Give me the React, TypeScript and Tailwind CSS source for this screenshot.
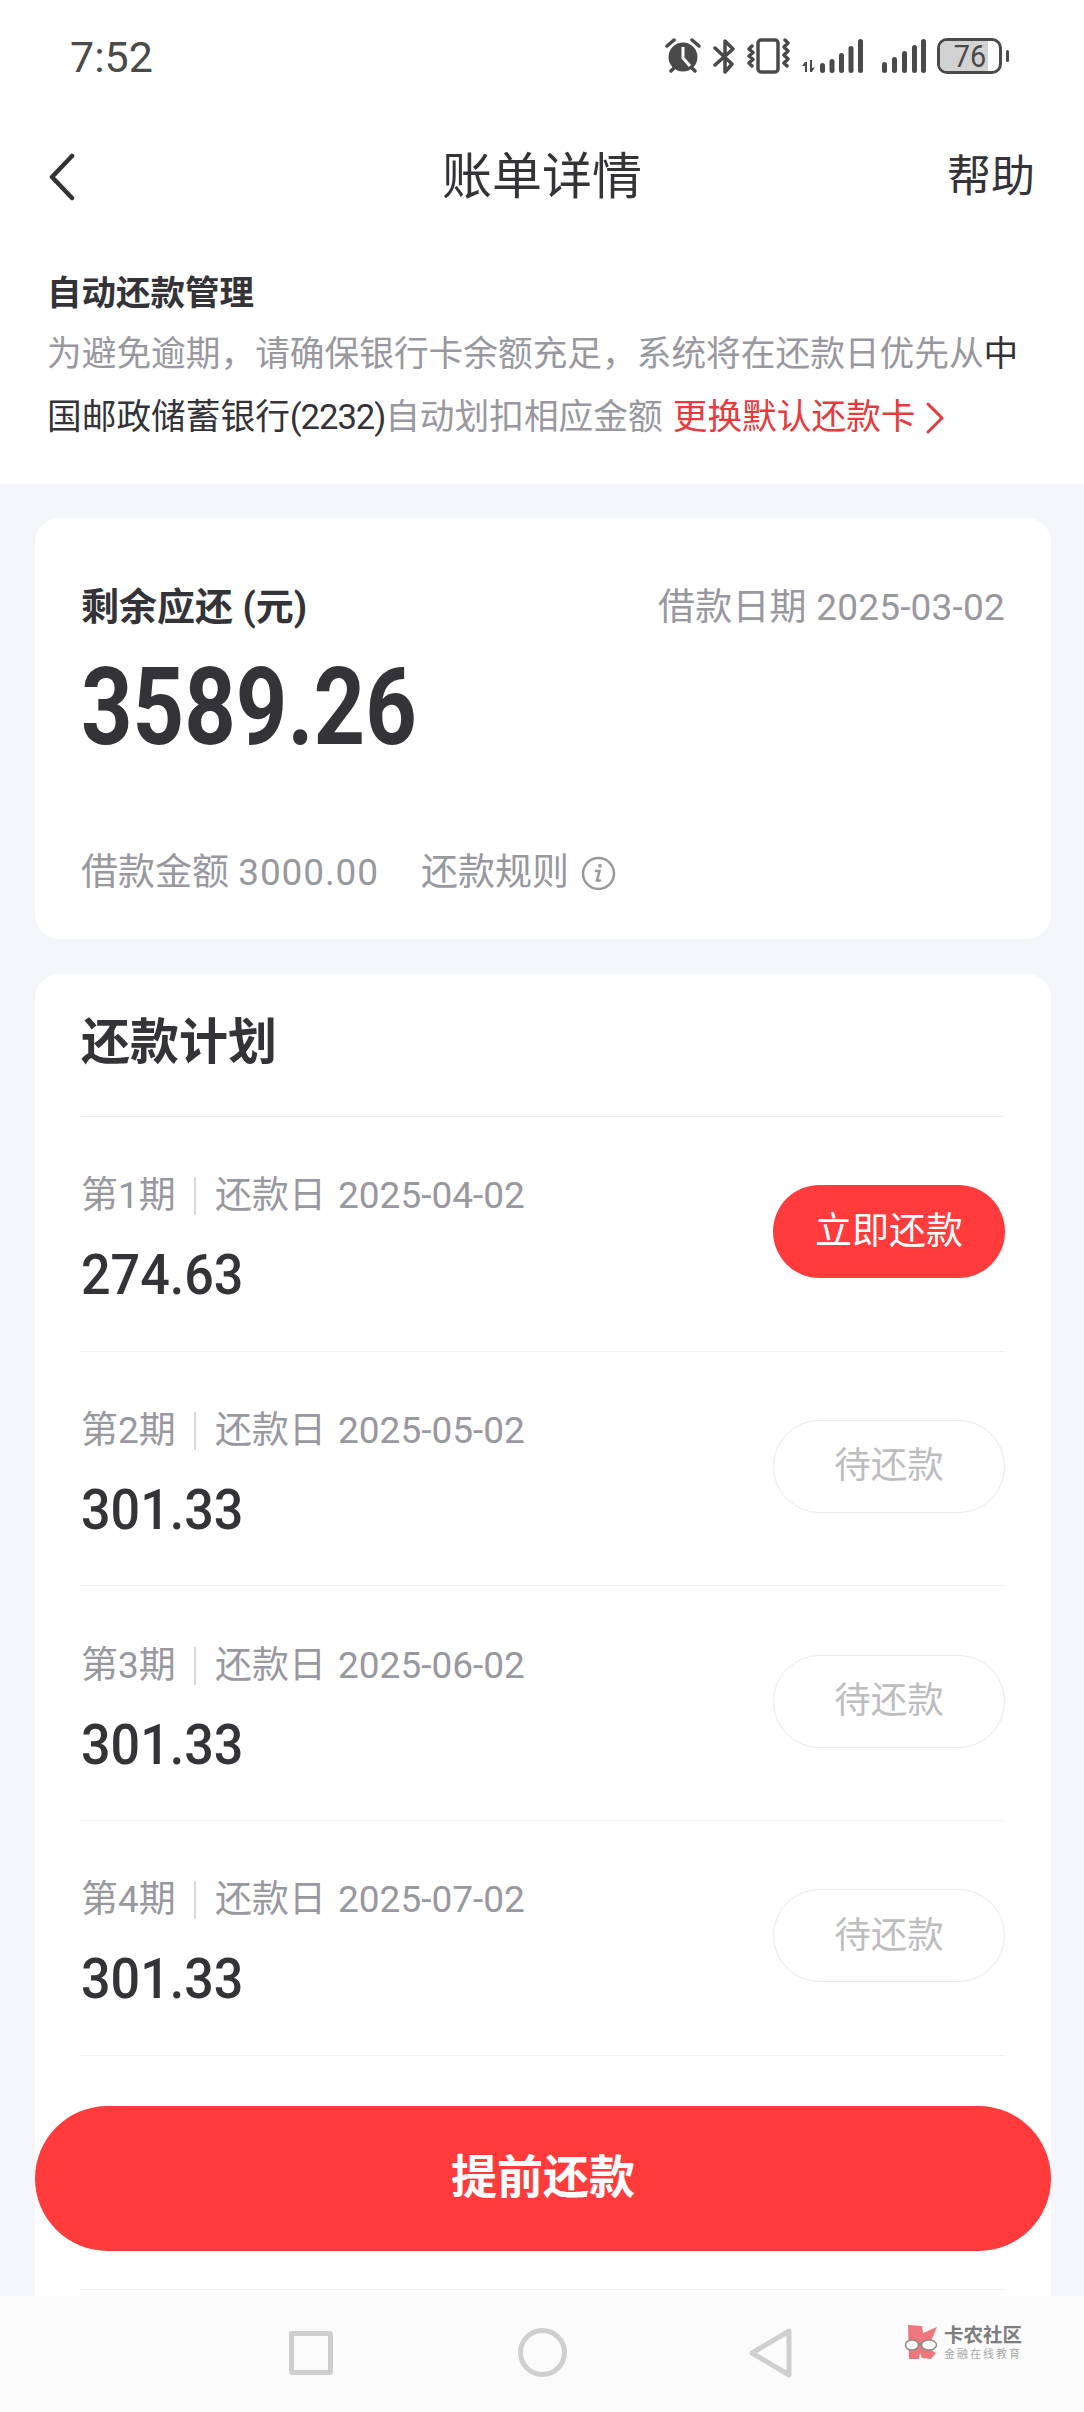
const plans = [
  { no: 1, date: '2025-04-02', amount: '274.63', current: true },
  { no: 2, date: '2025-05-02', amount: '301.33', current: false },
  { no: 3, date: '2025-06-02', amount: '301.33', current: false },
  { no: 4, date: '2025-07-02', amount: '301.33', current: false },
];

const StatusIcons = () => (
  <div className="ml-auto flex items-center text-[#4a4a4a]">
    {/* alarm */}
    <svg width="36" height="36" viewBox="0 0 36 36">
      <circle cx="18" cy="19" r="14.5" fill="currentColor" />
      <path d="M18 9v11l7 8" fill="none" stroke="#fff" strokeWidth="3" />
      <path d="M2 8l7-6M34 8l-7-6M6 33l3-3M30 33l-3-3" fill="none" stroke="currentColor" strokeWidth="3.5" strokeLinecap="round" />
    </svg>
    {/* bluetooth */}
    <svg className="ml-3" width="22" height="36" viewBox="0 0 22 36" fill="none" stroke="currentColor" strokeWidth="3.5" strokeLinejoin="round" strokeLinecap="round">
      <path d="M2 10l17 16-7 8V3l8 8-18 16" />
    </svg>
    {/* vibrate */}
    <svg className="ml-3" width="43" height="36" viewBox="0 0 43 36" fill="none" stroke="currentColor" strokeWidth="3.500" strokeLinejoin="round">
      <rect x="11" y="2" width="20" height="32" rx="3" />
      <path d="M5 8l-3 3 4 3.500-4 3.500 4 3.500-4 3.500 3 3M38 2l3 3-4 4 4 4-4 4 4 4-4 4 3 3" strokeLinecap="round" />
    </svg>
    {/* signal 1 */}
    <svg className="ml-3" width="61" height="36" viewBox="0 0 61 36" fill="currentColor">
      <path d="M3 24h2v10H3zM8 22h2v12H8zM0 28l3-4v4zM10 30l3-1-3 5z" />
      <rect x="18" y="25" width="5" height="10" rx="2.500" />
      <rect x="27.500" y="21" width="5" height="14" rx="2.500" />
      <rect x="37" y="15" width="5" height="20" rx="2.500" />
      <rect x="46.500" y="8" width="5" height="27" rx="2.500" />
      <rect x="56" y="1" width="5" height="34" rx="2.500" />
    </svg>
    {/* signal 2 */}
    <svg className="ml-[19px]" width="44" height="36" viewBox="0 0 44 36" fill="currentColor">
      <rect x="0" y="24" width="5" height="11" rx="2.500" />
      <rect x="10" y="19" width="5" height="16" rx="2.500" />
      <rect x="20" y="13" width="5" height="22" rx="2.500" />
      <rect x="30" y="7" width="5" height="28" rx="2.500" />
      <rect x="39" y="1" width="5" height="34" rx="2.500" />
    </svg>
    {/* battery */}
    <div className="relative ml-[11px] flex h-[36px] w-[65px] items-center justify-center overflow-hidden rounded-[10px] border-[3px] border-[#4a4a4a]">
      <div className="absolute inset-y-0 left-0 w-[48px] bg-[#d2d2d2]" />
      <span className="relative scale-x-90 text-[32px] leading-none font-normal">76</span>
    </div>
    <div className="ml-1 h-[12px] w-[3px] rounded-sm bg-[#4a4a4a]" />
  </div>
);

const PlanRow = ({ no, date, amount, current }: (typeof plans)[number]) => (
  <div className="flex h-[234.700px] items-center justify-between border-b border-[#f0f0f2] pb-[4px]">
    <div className="flex flex-col gap-[24px] pt-[13px]">
      <div className="flex h-[50px] items-center text-[37px] leading-[50px] text-[#98989e]">
        <span className="w-[94px] whitespace-nowrap">第{no}期</span>
        <span className="mx-[19px] h-[38px] w-[2px] bg-[#d8d8da]" />
        <span>还款日</span>
        <span className="ml-[12px]">{date}</span>
      </div>
      <div className="origin-left scale-x-[0.93] text-[56px] leading-[60px] font-medium text-[#333338]">{amount}</div>
    </div>
    {current ? (
      <div className="flex h-[93px] w-[232px] items-center justify-center rounded-full bg-[#ff3b3b] text-[37px] text-white">立即还款</div>
    ) : (
      <div className="flex h-[93px] w-[232px] items-center justify-center rounded-full border border-[#e9e9eb] text-[36.500px] text-[#bdbdc0]">待还款</div>
    )}
  </div>
);

const App = () => {
  return (
    <div className="relative h-[2412px] w-[1084px] overflow-hidden bg-[#f4f5f9] font-['Roboto','Noto_Sans_CJK_SC',sans-serif]">
      <div className="bg-white pb-[35px]">
        <div className="flex h-[112px] items-center pr-[75px] pl-[70px]">
          <span className="pt-[2px] text-[43px] leading-none text-[#4a4a4a]">7:52</span>
          <StatusIcons />
        </div>
        <div className="grid h-[126px] grid-cols-[1fr_auto_1fr] items-center px-[49px] pt-[4px]">
          <svg width="26" height="48" viewBox="0 0 26 48" fill="none" stroke="#333338" strokeWidth="4.500" strokeLinecap="round" strokeLinejoin="round">
            <path d="M23 3L3 24l20 21" />
          </svg>
          <span className="text-[50px] text-[#333338]">账单详情</span>
          <span className="justify-self-end text-[44px] text-[#333338]">帮助</span>
        </div>
        <div className="px-[47px] pt-[30px]">
          <div className="text-[34.500px] leading-[50px] font-bold text-[#333338]">自动还款管理</div>
          <div className="mt-[5px] text-[34.700px] leading-[63px] text-[#98989e]">
            <div className="flex">
              <span>为避免逾期，请确保银行卡余额充足，系统将在还款日优先从</span>
              <span className="text-[#333338]">中</span>
            </div>
            <div className="flex items-center">
              <span className="text-[#333338]">国邮政储蓄银行</span>
              <span className="tracking-[-1.100px] text-[#333338]">(2232)</span>
              <span>自动划扣相应金额</span>
              <span className="ml-[10px] text-[#e8393d]">更换默认还款卡</span>
              <svg className="ml-[9px]" width="20" height="34" viewBox="0 0 20 34" fill="none" stroke="#e8393d" strokeWidth="3" strokeLinecap="round" strokeLinejoin="round">
                <path d="M3 3l14 14L3 31" />
              </svg>
            </div>
          </div>
        </div>
      </div>

      <div className="mt-[34px] mr-[33px] ml-[35px] rounded-[24px] bg-white px-[46px] pt-[64px] pb-[41px]">
        <div className="flex items-center justify-between leading-[50px]">
          <span className="pb-[2px] text-[38px] font-bold text-[#333338]">剩余应还 (元)</span>
          <span className="text-[37px] tracking-[0.2px] text-[#98989e]">借款日期 2025-03-02</span>
        </div>
        <div className="mt-[18px] origin-left scale-x-[0.833] text-[108px] leading-[110px] font-bold text-[#333338]">3589.26</div>
        <div className="mt-[86px] flex items-center text-[37px] leading-[50px] text-[#98989e]">
          <span>借款金额 <span className="tracking-[0.9px]">3000.00</span></span>
          <span className="ml-[42px]">还款规则</span>
          <svg className="ml-[12px]" width="35" height="35" viewBox="0 0 35 35" fill="none" stroke="#98989e" strokeWidth="2.500" strokeLinecap="round">
            <circle cx="17.500" cy="17.500" r="15.500" />
            <path d="M15 15h3.500l-2.500 9.500h3" />
            <path d="M19 9.500v0.500" strokeWidth="3.500" />
          </svg>
        </div>
      </div>

      <div className="mt-[35px] mr-[33px] ml-[35px] rounded-[24px] bg-white px-[46px] pb-[60px]">
        <div className="flex h-[143px] items-center border-b border-[#ececee] pb-[4px] text-[49px] font-bold text-[#333338]">还款计划</div>
        {plans.map((plan) => (
          <PlanRow key={plan.no} {...plan} />
        ))}
        <div className="h-[234.700px] border-b border-[#f0f0f2]" />
      </div>

      {/* floating button */}
      <div className="absolute top-[2106px] left-[35px] flex h-[145px] w-[1016px] items-center justify-center rounded-full bg-[#ff3b3b] pb-[3px] text-[46px] font-bold text-white">提前还款</div>

      {/* system nav */}
      <div className="absolute inset-x-0 bottom-0 flex h-[116px] items-center bg-[#fbfbfb] pb-[3px] pl-[289px]">
        <div className="h-[44px] w-[44px] rounded-[3px] border-[5px] border-[#cfcfcf]" />
        <div className="ml-[185px] h-[49px] w-[49px] rounded-full border-[5px] border-[#cfcfcf]" />
        <svg className="ml-[182px]" width="44" height="50" viewBox="0 0 44 50" fill="none" stroke="#cfcfcf" strokeWidth="5" strokeLinejoin="round">
          <path d="M40 3L3 25l37 22z" />
        </svg>
      </div>

      {/* watermark */}
      <div className="absolute top-[2325px] left-[904px] flex items-start">
        <svg width="38" height="36" viewBox="0 0 38 36">
          <path d="M4 0l14 1 1 7 14-6-6 14-8 4 13 8-5 6-9-1-2-5-1 6H5z" fill="#ee767e" />
          <ellipse cx="8" cy="20" rx="6.500" ry="5" fill="#fff" stroke="#8a8a8a" strokeWidth="1.500" />
          <ellipse cx="25" cy="20" rx="7.500" ry="5" fill="#fff" stroke="#8a8a8a" strokeWidth="1.500" />
          <path d="M14 19h4" stroke="#8a8a8a" strokeWidth="1.500" />
        </svg>
        <div className="ml-[2px] flex flex-col">
          <span className="text-[19.500px] leading-[22px] font-bold text-[#7d7d7d]">卡农社区</span>
          <span className="mt-[2px] text-[11px] leading-[12px] tracking-[2px] text-[#a8a8a8]">金融在线教育</span>
        </div>
      </div>
    </div>
  );
};

export default App;
